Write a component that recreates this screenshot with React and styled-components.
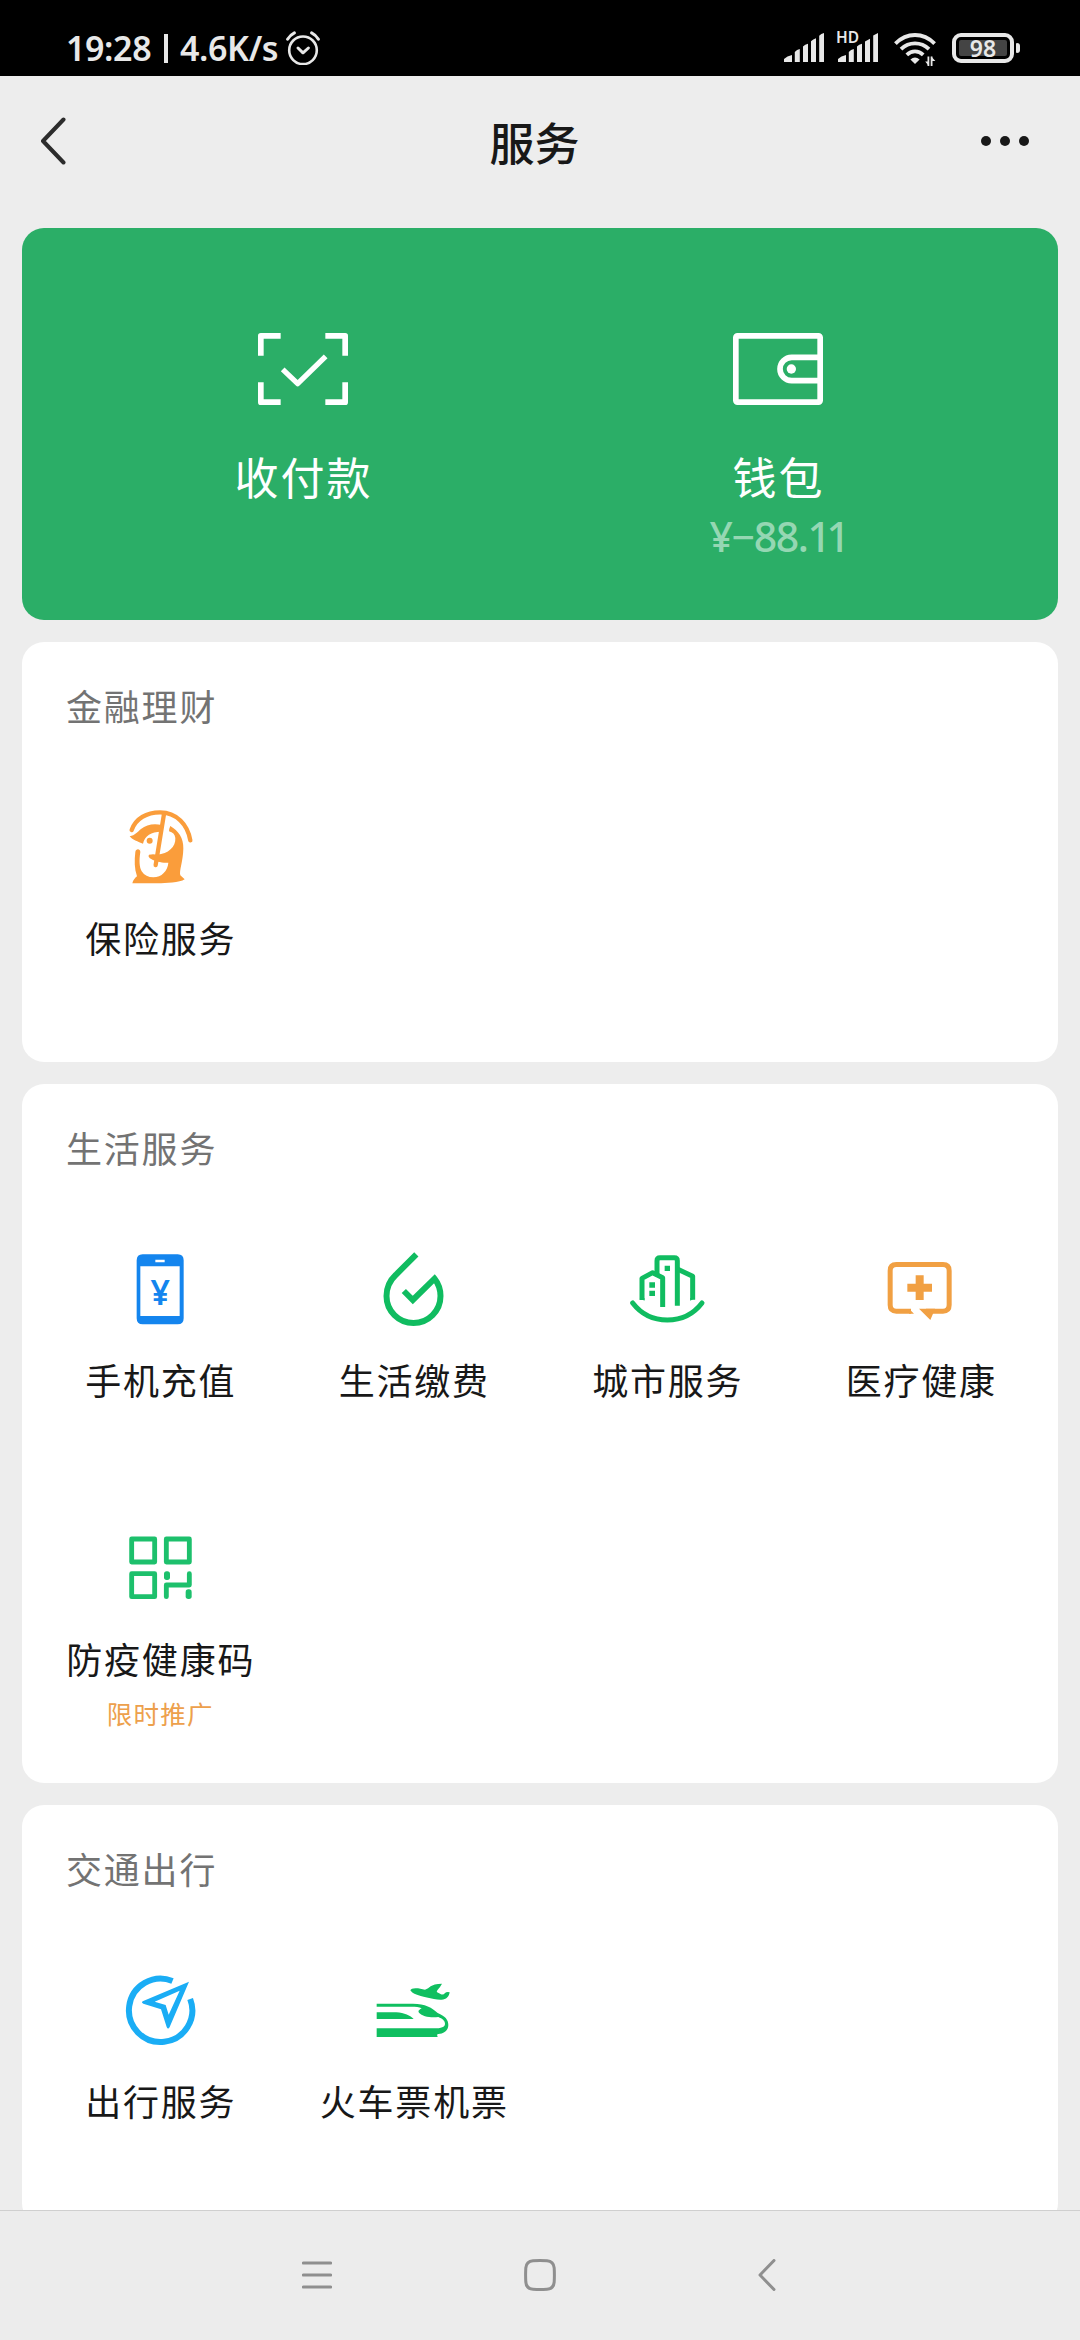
import React from "react";
import styled, { createGlobalStyle } from "styled-components";

const GlobalStyle = createGlobalStyle`
  * {
    box-sizing: border-box;
  }
  body {
    margin: 0;
    background: #ededed;
    font-family: "Noto Sans CJK SC", "Noto Sans", sans-serif;
  }
  svg {
    display: block;
    flex: none;
  }
`;

const Page = styled.div`
  width: 1080px;
  height: 2340px;
  display: flex;
  flex-direction: column;
  overflow: hidden;
  background: #ededed;
`;

const StatusBar = styled.header`
  height: 76px;
  flex: none;
  display: flex;
  justify-content: space-between;
  padding: 31px 60px 0 66px;
  background: #000;
  color: #e8e8e8;
`;

const StatusLeft = styled.div`
  display: flex;
  align-items: center;
  height: 34px;
  font-family: "Noto Sans", sans-serif;
  font-size: 34px;
  font-weight: 600;
  line-height: 34px;
  white-space: nowrap;
`;

const Clock = styled.span`
  width: 98px;
  letter-spacing: -0.4px;
`;

const Divider = styled.span`
  width: 4px;
  height: 29px;
  background: #e8e8e8;
`;

const Speed = styled.span`
  width: 107px;
  padding-left: 12px;
  letter-spacing: -0.4px;
  margin-right: 11px;
`;

const StatusRight = styled.div`
  display: flex;
  align-items: flex-start;
`;

const SignalBox = styled.div`
  position: relative;
  padding-top: 2px;
  margin-right: ${(props) => props.$gap}px;
`;

const HdMark = styled.span`
  position: absolute;
  left: -2px;
  top: -1px;
  font-family: "Noto Sans", sans-serif;
  font-size: 15.5px;
  font-weight: 600;
  line-height: 15px;
`;

const WifiBox = styled.div`
  padding-top: 2px;
  margin-right: 16px;
`;

const Battery = styled.div`
  margin-top: 2px;
  width: 62px;
  height: 30px;
  padding: 3px;
  border: 4px solid #e8e8e8;
  border-radius: 9px;
`;

const BatteryLevel = styled.div`
  height: 16px;
  border-radius: 2px;
  background: #444;
  font-family: "Noto Sans", sans-serif;
  font-size: 23px;
  font-weight: 600;
  line-height: 17px;
  text-align: center;
`;

const BatteryTip = styled.div`
  width: 4px;
  height: 10px;
  margin: 12px 0 0 2px;
  border-radius: 1px 3px 3px 1px;
  background: #e8e8e8;
`;

const NavBar = styled.nav`
  height: 152px;
  flex: none;
  display: grid;
  grid-template-columns: 1fr auto 1fr;
  align-items: center;
  padding: 0 51px 22px 40px;
  color: #181818;
`;

const NavTitle = styled.h1`
  margin: 0;
  padding-top: 2px;
  font-size: 45px;
  font-weight: 500;
  line-height: 60px;
`;

const MoreDots = styled.div`
  display: flex;
  justify-content: flex-end;
  gap: 9px;
`;

const Dot = styled.i`
  width: 10px;
  height: 10px;
  border-radius: 50%;
  background: #181818;
`;

const Main = styled.main`
  flex: 1;
  min-height: 0;
  overflow: hidden;
  display: flex;
  flex-direction: column;
  gap: 22px;
  padding: 0 22px;
`;

const PayCard = styled.section`
  height: 392px;
  flex: none;
  display: grid;
  grid-template-columns: 475px 475px;
  justify-content: center;
  padding-top: 105px;
  border-radius: 22px;
  background: #2bae67;
  color: #fff;
`;

const PayItem = styled.div`
  display: flex;
  flex-direction: column;
  align-items: center;
`;

const PayLabel = styled.div`
  margin-top: 41px;
  padding-left: 2px;
  font-size: 44px;
  line-height: 60px;
  letter-spacing: 2px;
`;

const Balance = styled.div`
  margin-top: 6px;
  font-family: "Noto Sans", sans-serif;
  font-size: 41px;
  font-weight: 500;
  line-height: 48px;
  letter-spacing: -1.4px;
  color: #95d7b3;
`;

const Cents = styled.span`
  letter-spacing: -4.5px;
`;

const Card = styled.section`
  flex: none;
  padding: 0 11px 12px;
  border-radius: 22px;
  background: #fff;
`;

const CardTitle = styled.h2`
  height: 129px;
  margin: 0;
  padding: 38px 0 0 33px;
  font-size: 36px;
  font-weight: 400;
  line-height: 50px;
  letter-spacing: 1.8px;
  color: #737373;
`;

const Grid = styled.div`
  display: grid;
  grid-template-columns: repeat(4, 1fr);
  grid-auto-rows: 279px;
`;

const Item = styled.div`
  display: flex;
  flex-direction: column;
  align-items: center;
  padding-top: 31px;
`;

const ItemLabel = styled.div`
  margin-top: 20px;
  padding-left: 2px;
  font-size: 36px;
  line-height: 50px;
  letter-spacing: 1.8px;
  white-space: nowrap;
  color: #181818;
`;

const ItemTag = styled.div`
  margin-top: 12px;
  padding-left: 1px;
  font-size: 25.5px;
  line-height: 36px;
  letter-spacing: 1.2px;
  color: #eda04c;
`;

const SystemBar = styled.footer`
  height: 130px;
  flex: none;
  display: grid;
  grid-template-columns: 1fr auto 1fr;
  align-items: center;
  padding-bottom: 1px;
  border-top: 1px solid #cfcfcf;
  background: #ececec;
`;

const LeftKey = styled.div`
  padding-left: 302px;
`;

const RightKey = styled.div`
  padding-left: 202px;
`;

const Icon = ({ children }) => (
  <svg width="90" height="90" viewBox="0 0 270 270" fill="none">
    {children}
  </svg>
);

const AlarmIcon = () => (
  <svg width="34" height="34" viewBox="0 0 34 34" fill="none" stroke="#e8e8e8" strokeLinecap="round">
    <circle cx="17" cy="19.3" r="13.8" strokeWidth="2.6" />
    <path d="M1.6 8.2Q4 4 8.4 1.8M32.4 8.2Q30 4 25.6 1.8" strokeWidth="3" />
    <path d="M12 17l5 4.8 5.4-4.8" strokeWidth="3" strokeLinejoin="round" />
  </svg>
);

const SignalIcon = ({ short }) => (
  <svg width="40" height="29" viewBox="0 0 40 29" fill="#e8e8e8">
    <path d="M0 29v-3q3-3 8-4v7zM10.8 29V19q2-2.4 5-3v13zM19 29V13.500q2-2 5-2.800V29z" />
    <path d={short ? "M27 29V8.500l5-2.800V29zM35.200 29V2.500L40 0v29z" : "M27 29V8.200q2-2 5-3V29zM35.200 29V2.800q1.800-2 4.800-2.800v29z"} />
  </svg>
);

const WifiIcon = () => (
  <svg width="42" height="34" viewBox="0 0 42 34" fill="none" stroke="#e8e8e8" strokeWidth="3.8">
    <path d="M1.400 10.600Q10 2 21 2t19.600 8.600" />
    <path d="M7 16.200Q13 10.400 21 10.400t14 5.800" />
    <path d="M12.800 21.800Q16.400 18.400 21 18.400t8.200 3.400" />
    <path d="M16.400 26.600Q21 22.600 25.600 26.600L21 31z" fill="#e8e8e8" stroke="none" />
    <path d="M34.400 23.500V33M37.600 33v-9.500" strokeWidth="1.800" />
    <path d="M34.800 33l-3.600-4.600h3.600zM37.200 23.500l4.200 4.600h-4.200z" fill="#e8e8e8" stroke="none" />
  </svg>
);

const BackIcon = () => (
  <svg width="27" height="48" viewBox="0 0 27 48" fill="none">
    <path d="M23.500 2.500L3 24l20.500 21.500" stroke="#2c2c2c" strokeWidth="4" strokeLinecap="round" strokeLinejoin="round" />
  </svg>
);

const ScanIcon = () => (
  <svg width="90" height="72" viewBox="0 0 270 216" fill="none" stroke="#fff" strokeWidth="17" strokeLinejoin="round">
    <path d="M8.500 68V8.500H68M202 8.500h59.500V68M261.500 148v59.500H202M68 207.500H8.500V148" />
    <path d="M74 109l45 43 84-82" strokeWidth="16" />
  </svg>
);

const WalletIcon = () => (
  <svg width="90" height="72" viewBox="0 0 270 216" fill="none" stroke="#fff" strokeWidth="17">
    <rect x="8.500" y="8.500" width="253" height="199" rx="5" />
    <path d="M262 73h-86a35 35 0 0 0 0 70h86" />
    <circle cx="175" cy="108" r="14" fill="#fff" stroke="none" />
  </svg>
);

const InsuranceIcon = () => (
  <Icon>
    <path d="M50 84C62 50 95 31 135 31c50 0 83 37 91 84" stroke="#fa9d3b" strokeWidth="13" strokeLinecap="round" />
    <path d="M147 36l-25 153" stroke="#fa9d3b" strokeWidth="13" strokeLinecap="round" />
    <path
      fill="#fa9d3b"
      d="M44 103c16-3 24-14 34-22 16-13 38-18 62-12l-2 20c-29 0-49 12-54 36-14-5-34-13-40-22z"
    />
    <path
      fill="#fa9d3b"
      d="M166 72c24 14 40 36 39 68-1 40-13 65-9 80l13 12c-14 10-59 12-79 12H52c2-10 8-16 14-21-8-23-8-48-5-73 1-11 15-11 15 0-4 25-3 45 4 58 8 12 20 18 35 18 25 0 43-20 45-44-17 2-40-4-50-10q-13-7-8-14 12-2 25 0c32-2 56-24 54-50q-2-16-19-20 0-8 4-16z"
    />
    <circle cx="104" cy="116" r="9" fill="#fa9d3b" />
  </Icon>
);

const PhoneIcon = () => (
  <Icon>
    <path
      fill="#1485ee"
      fillRule="evenodd"
      d="M83 31h105q18 0 18 18v174q0 18-18 18H83q-18 0-18-18V49q0-18 18-18zM76 67v149h118V67zM121 47v8h28v-8z"
    />
    <text x="136" y="182" fill="#1485ee" fontFamily="Noto Sans" fontSize="102" fontWeight="600" textAnchor="middle">
      ¥
    </text>
  </Icon>
);

const DropIcon = () => (
  <Icon>
    <path
      d="M145 31L83 93C66 109 55.500 130 55.500 156a81 81 0 0 0 162 0c0-19-7-38-18-52l-65 64-27-27"
      stroke="#10bc60"
      strokeWidth="18"
    />
  </Icon>
);

const CityIcon = () => (
  <Icon>
    <g stroke="#10bc60" strokeWidth="15" strokeLinejoin="round">
      <path d="M32 177c26 34 63 51 104 51s78-17 104-51" strokeLinecap="round" />
      <path d="M60 168v-65l32-17 30 15v88" />
      <path d="M105 92V50q0-9 9-9h43q9 0 9 9v135" />
      <path d="M166 75l46 22v70" />
    </g>
    <path fill="#10bc60" d="M128 65h16v16h-16zM82 115h17v16H82zM82 140h17v16H82zM52.500 162h15v8zM204.500 162h15l-15 8z" />
  </Icon>
);

const MedicalIcon = () => (
  <Icon>
    <path d="M108 201.500H64q-18.500 0-18.500-18.500V80q0-18.500 18.500-18.500h140q18.500 0 18.500 18.500v103q0 18.500-18.500 18.500h-51" stroke="#f1a043" strokeWidth="15" />
    <path fill="#f1a043" d="M102 194l15 15h-15zM132 194h48l-6 15-8 19zM122 94h24v25h25v24h-25v25h-24v-25H97v-24h25z" />
  </Icon>
);

const CodeIcon = () => (
  <Icon>
    <g stroke="#1dc06c" strokeWidth="14.500" strokeLinejoin="round">
      <rect x="50" y="48" width="69" height="69" />
      <rect x="154" y="48" width="69" height="69" />
      <rect x="50" y="152" width="69" height="69" />
      <path d="M154 221v-35h69v-34" strokeLinecap="round" />
    </g>
    <rect x="147" y="145" width="18" height="26" rx="8" fill="#1dc06c" />
    <rect x="212" y="199" width="18" height="29" rx="8" fill="#1dc06c" />
  </Icon>
);

const TravelIcon = () => (
  <Icon>
    <path d="M172.500 48A95 95 0 1 0 225.500 102" stroke="#1aadf5" strokeWidth="18" />
    <path
      fill="#1aadf5"
      fillRule="evenodd"
      d="M222 50L83 109q-5 4 2 7l53 17 17 53q4 9 9 0zM194 77l-75 33 33 10 9 29z"
    />
  </Icon>
);

const TrainIcon = () => (
  <Icon>
    <g fill="#0fbf60" transform="translate(5 0)">
      <path d="M122 76q3-8 23-6l21 4q10-3 17-10 8-7 34-8-4 8-14 20l-2 5 13 7q8 2 12-4 5-4 14-2c-2 14-12 24-28 22-22-1-62-12-70-15-12-3-16-8-20-13z" />
      <path d="M21 116h109c36 0 58 12 74 28 22 9 32 20 32 36 0 17-14 26-30 27q-6 0-2 9H21v-26h172c22 0 33-4 33-14 0-9-8-15-20-20-22 3-48-1-58-13-4-5 0-8 8-13-8-4-18-5-30-5H21z" />
      <path d="M21 142h59c24 1 42 10 52 20H21z" />
    </g>
  </Icon>
);

const MenuKey = () => (
  <svg width="30" height="32" viewBox="0 0 30 32" stroke="#8f8f8f" strokeWidth="3.200" strokeLinecap="round">
    <path d="M1.500 4h27M1.500 16h27M1.500 28h27" />
  </svg>
);

const HomeKey = () => (
  <svg width="32" height="32" viewBox="0 0 32 32" fill="none" stroke="#8f8f8f" strokeWidth="3">
    <path d="M9 1.700q7-.4 14 0 6.600.4 7.200 7.300.4 7 0 14-.6 6.900-7.200 7.300-7 .4-14 0Q2.400 29.900 1.800 23q-.4-7 0-14Q2.400 2.100 9 1.700z" />
  </svg>
);

const BackKey = () => (
  <svg width="18" height="32" viewBox="0 0 18 32" fill="none" stroke="#8f8f8f" strokeWidth="3" strokeLinecap="round" strokeLinejoin="round">
    <path d="M16 1.500L2 16l14 14.500" />
  </svg>
);

const sections = [
  {
    title: "金融理财",
    items: [{ label: "保险服务", icon: <InsuranceIcon /> }],
  },
  {
    title: "生活服务",
    items: [
      { label: "手机充值", icon: <PhoneIcon /> },
      { label: "生活缴费", icon: <DropIcon /> },
      { label: "城市服务", icon: <CityIcon /> },
      { label: "医疗健康", icon: <MedicalIcon /> },
      { label: "防疫健康码", icon: <CodeIcon />, tag: "限时推广" },
    ],
  },
  {
    title: "交通出行",
    items: [
      { label: "出行服务", icon: <TravelIcon /> },
      { label: "火车票机票", icon: <TrainIcon /> },
    ],
  },
];

const App = () => {
  return (
    <>
      <GlobalStyle />
      <Page>
        <StatusBar>
          <StatusLeft>
            <Clock>19:28</Clock>
            <Divider />
            <Speed>4.6K/s</Speed>
            <AlarmIcon />
          </StatusLeft>
          <StatusRight>
            <SignalBox $gap={14}>
              <SignalIcon />
            </SignalBox>
            <SignalBox $gap={16}>
              <HdMark>HD</HdMark>
              <SignalIcon short />
            </SignalBox>
            <WifiBox>
              <WifiIcon />
            </WifiBox>
            <Battery>
              <BatteryLevel>98</BatteryLevel>
            </Battery>
            <BatteryTip />
          </StatusRight>
        </StatusBar>
        <NavBar>
          <BackIcon />
          <NavTitle>服务</NavTitle>
          <MoreDots>
            <Dot />
            <Dot />
            <Dot />
          </MoreDots>
        </NavBar>
        <Main>
          <PayCard>
            <PayItem>
              <ScanIcon />
              <PayLabel>收付款</PayLabel>
            </PayItem>
            <PayItem>
              <WalletIcon />
              <PayLabel>钱包</PayLabel>
              <Balance>
                ¥−88.<Cents>11</Cents>
              </Balance>
            </PayItem>
          </PayCard>
          {sections.map((section) => (
            <Card key={section.title}>
              <CardTitle>{section.title}</CardTitle>
              <Grid>
                {section.items.map((item) => (
                  <Item key={item.label}>
                    {item.icon}
                    <ItemLabel>{item.label}</ItemLabel>
                    {item.tag && <ItemTag>{item.tag}</ItemTag>}
                  </Item>
                ))}
              </Grid>
            </Card>
          ))}
        </Main>
        <SystemBar>
          <LeftKey>
            <MenuKey />
          </LeftKey>
          <HomeKey />
          <RightKey>
            <BackKey />
          </RightKey>
        </SystemBar>
      </Page>
    </>
  );
};

export default App;
